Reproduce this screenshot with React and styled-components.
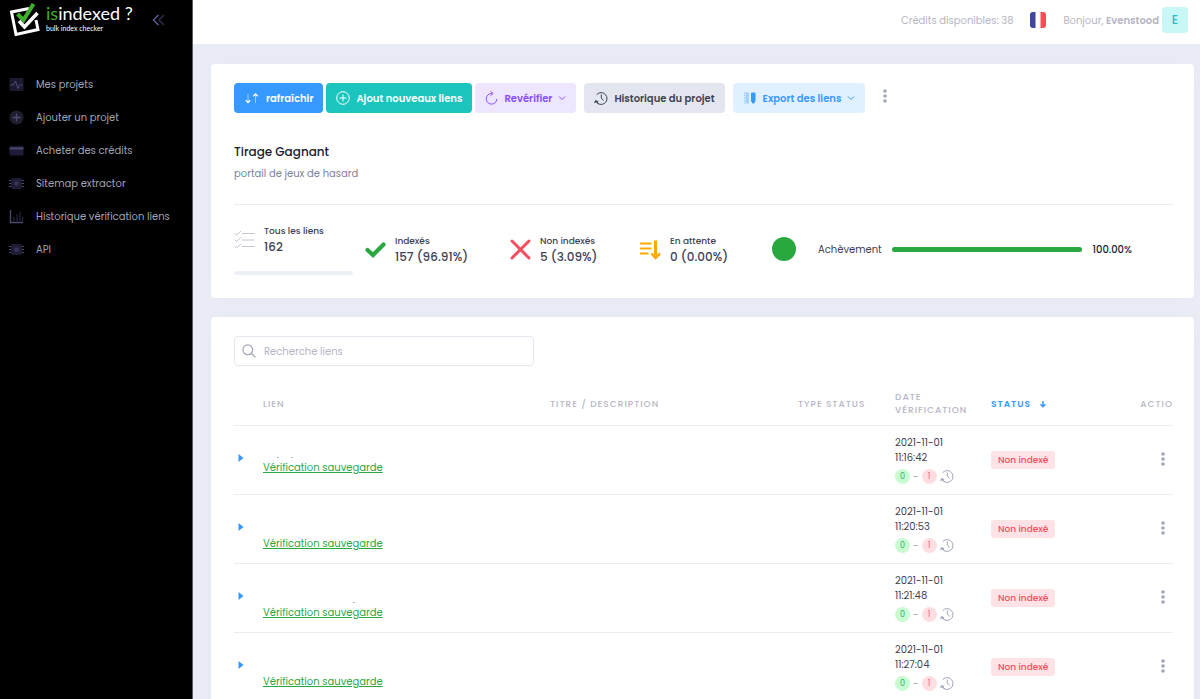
import { useState } from "react";
import styled, { createGlobalStyle } from "styled-components";

const GlobalStyle = createGlobalStyle`
  * {
    box-sizing: border-box;
  }
  body {
    margin: 0;
    font-family: Poppins, Inter, "Liberation Sans", sans-serif;
    font-size: 10px;
    line-height: 15px;
    color: #3f4254;
    background: #eaecf5;
  }
  button, input {
    font: inherit;
  }
`;

const Layout = styled.div`
  display: flex;
  height: 100vh;
  overflow: hidden;
`;

/* sidebar */
const Sidebar = styled.aside`
  flex: 0 0 193px;
  background: #000;
  border-right: 1px solid #5b5c66;
`;
const Brand = styled.div`
  display: flex;
  align-items: flex-start;
  height: 68px;
  padding: 3px 27px 0 9px;
`;
const Logo = styled.a`
  display: flex;
  flex: 1;
  gap: 4px;
  color: #fff;
  text-decoration: none;
  font-family: Lato, "Open Sans", sans-serif;
`;
const LogoText = styled.span`
  display: flex;
  flex-direction: column;
  white-space: nowrap;
`;
const LogoName = styled.span`
  font-size: 18px;
  line-height: 20px;

  em {
    font-style: normal;
    color: #3fae2a;
  }
`;
const LogoTagline = styled.span`
  font-size: 7px;
  line-height: 10px;
`;
const IconButton = styled.button`
  display: inline-flex;
  align-items: center;
  justify-content: center;
  padding: 0;
  border: 0;
  background: none;
  color: ${(props) => props.$color || "#a1a5b7"};
  cursor: pointer;
`;
const CollapseButton = styled(IconButton)`
  margin-top: 11px;
`;
const Nav = styled.nav`
  display: flex;
  flex-direction: column;
`;
const NavItem = styled.a`
  display: flex;
  align-items: center;
  gap: 12px;
  height: 33px;
  padding-left: 9px;
  color: #a2a3b7;
  text-decoration: none;
  white-space: nowrap;
`;

/* page */
const Page = styled.div`
  flex: 1;
  min-width: 0;
  display: flex;
  flex-direction: column;
`;
const Topbar = styled.header`
  display: flex;
  flex-shrink: 0;
  align-items: center;
  justify-content: flex-end;
  padding: 7px 12px 11px;
  background: #fff;
  color: #b5b5c3;
`;
const FlagButton = styled(IconButton)`
  margin: 0 17px;
`;
const UserName = styled.strong`
  font-weight: 600;
`;
const Avatar = styled.span`
  width: 26px;
  margin-left: 3px;
  border-radius: 4px;
  background: #c9f7f5;
  color: #1bc5bd;
  font-size: 12px;
  font-weight: 500;
  line-height: 26px;
  text-align: center;
`;
const Content = styled.main`
  flex: 1;
  display: flex;
  flex-direction: column;
  gap: 19px;
  padding: 20px 6px 20px 18px;
`;
const Card = styled.section`
  padding: 19px 21px 23px 23px;
  border-radius: 4px;
  background: #fff;
  box-shadow: 0 0 20px rgba(76, 87, 125, 0.02);
`;

/* toolbar */
const Toolbar = styled.div`
  display: flex;
  align-items: center;
  gap: 8px;
`;
const ButtonGroup = styled.div`
  display: flex;
  gap: 3px;
`;
const Button = styled.button`
  display: flex;
  align-items: center;
  justify-content: center;
  gap: 6px;
  height: 30px;
  padding: 0 10px;
  border: 0;
  border-radius: 4px;
  background: ${(props) => props.$bg};
  color: ${(props) => props.$color || "#fff"};
  font-weight: 600;
  white-space: nowrap;
  cursor: pointer;
`;
const ToolbarMore = styled(IconButton)`
  align-self: flex-start;
  width: 24px;
  height: 26px;
`;
const Title = styled.h1`
  margin: 29px 0 4px;
  color: #181c32;
  font-size: 12px;
  font-weight: 500;
  line-height: 20px;
`;
const Subtitle = styled.p`
  margin: 0 0 22px;
  color: #7e8299;
  line-height: 16px;
`;

/* stats */
const Stats = styled.div`
  display: grid;
  grid-template-columns: 131fr 145fr 130fr 132fr 401fr;
  align-items: center;
  padding-top: 18px;
  border-top: 1px solid #ebedf3;
`;
const Stat = styled.div`
  display: flex;
  gap: 9px;
  align-items: center;
  white-space: nowrap;
`;
const StatLabel = styled.div`
  font-size: 9px;
  font-weight: 500;
  line-height: 16px;
`;
const StatValue = styled.div`
  font-size: 12px;
  font-weight: 500;
  line-height: 16px;
`;
const TotalBar = styled.div`
  height: 4px;
  margin: 16px 12px 0 0;
  border-radius: 2px;
  background: #ecf0f6;
`;
const Completion = styled.div`
  display: flex;
  align-items: center;
  gap: 10px;
  padding-right: 41px;
`;
const Dot = styled.span`
  width: 24px;
  height: 24px;
  margin-right: 12px;
  border-radius: 50%;
  background: #28a83f;
`;
const Track = styled.div`
  flex: 1;
  height: 5px;
  border-radius: 3px;
  background: #ecf0f6;
`;
const Fill = styled.div`
  height: 100%;
  border-radius: 3px;
  background: #28a83f;
`;
const Percent = styled.span`
  font-weight: 500;
  color: #181c32;
`;

/* search */
const SearchBox = styled.label`
  display: flex;
  align-items: center;
  gap: 8px;
  width: 300px;
  height: 30px;
  padding: 0 7px;
  border: 1px solid #e4e6ef;
  border-radius: 4px;
  color: #a1a5b7;
`;
const SearchInput = styled.input`
  flex: 1;
  min-width: 0;
  padding: 0;
  border: 0;
  outline: 0;
  color: #3f4254;

  &::placeholder {
    color: #b5b5c3;
    opacity: 1;
  }
`;

/* table */
const Table = styled.table`
  width: 100%;
  margin-top: 16px;
  border-collapse: collapse;
  table-layout: fixed;
`;
const Th = styled.th`
  width: ${(props) => props.$width || "auto"};
  height: 43px;
  padding: 9px 0 8px;
  border-bottom: 1px solid #ebedf3;
  color: ${(props) => (props.$active ? "#3699ff" : "#b5b5c3")};
  font-size: 9px;
  font-weight: 500;
  letter-spacing: 1px;
  line-height: 13px;
  text-align: ${(props) => props.$align || "left"};
  text-transform: uppercase;
`;
const SortButton = styled(IconButton)`
  gap: 8px;
  font-weight: 600;
  letter-spacing: inherit;
  text-transform: inherit;
`;
const Td = styled.td`
  padding: 9px 0 10px;
  border-bottom: 1px solid #ebedf3;
  text-align: ${(props) => props.$align || "left"};
`;
const ExpandButton = styled(IconButton)`
  width: 13px;
`;
const UrlLines = styled.div`
  display: flex;
  align-items: flex-end;
  height: ${(props) => props.$lines * 15}px;
`;
const SavedLink = styled.a`
  color: #28a745;
  text-decoration: underline;
`;
const Moment = styled.div`
  width: 60px;
`;
const Counts = styled.div`
  display: flex;
  align-items: flex-start;
  gap: 3px;
  margin-top: 4px;
  color: #a1a5b7;
`;
const Count = styled.span`
  width: 15px;
  border-radius: 50%;
  background: ${(props) => (props.$ok ? "#c9fbd3" : "#ffdde0")};
  color: ${(props) => (props.$ok ? "#35a853" : "#f0647a")};
  font-size: 8px;
  line-height: 15px;
  text-align: center;
`;
const Badge = styled.span`
  display: inline-block;
  padding: 0 7px;
  border-radius: 3px;
  background: #ffe2e5;
  color: #f64e60;
  font-size: 9px;
  font-weight: 500;
  line-height: 18px;
`;
const RowMore = styled(IconButton)`
  width: 20px;
  height: 20px;
`;

function LogoMark() {
  return (
    <svg width="33" height="34" viewBox="0 0 33 34" fill="none" aria-hidden="true">
      <path d="M20 5.500 2.500 9 7 31.500 29 26.500 27 17" stroke="#fff" strokeWidth="3" />
      <path d="m8.500 11 6 6L24.500 1" stroke="#3fae2a" strokeWidth="4" />
      <path d="m10 18 5.500 6L28.500 10" stroke="#fff" strokeWidth="3.500" />
    </svg>
  );
}

function CollapseIcon() {
  return (
    <svg width="13" height="12" viewBox="0 0 13 12" fill="none" strokeWidth="1.500" aria-hidden="true">
      <path d="M6.500 1 1.500 6l5 5" stroke="#5d5c92" />
      <path d="m12 1-5 5 5 5" stroke="#2b2a48" />
    </svg>
  );
}

function NavIcon({ name }) {
  return (
    <svg width="15" height="15" viewBox="0 0 15 15" fill="none" stroke="#4c4b73" aria-hidden="true">
      {name === "pulse" && (
        <>
          <rect x="0.500" y="1" width="14" height="13" rx="1" fill="#1b1a30" stroke="none" />
          <path d="M1.500 8h3l2-4 2.500 7.500L10.500 8h3" />
        </>
      )}
      {name === "plus" && (
        <>
          <circle cx="7.500" cy="7.500" r="7" fill="#1e1e2d" stroke="none" />
          <path d="M7.500 3.500v8M3.500 7.500h8" strokeWidth="1.300" />
        </>
      )}
      {name === "card" && (
        <>
          <rect x="0.500" y="3" width="14" height="9.500" rx="1" fill="#1e1c38" stroke="none" />
          <path d="M.5 5.500h14" stroke="#494870" strokeWidth="2" />
        </>
      )}
      {name === "chip" && (
        <>
          <rect x="2" y="2" width="11" height="11" rx="2" fill="#1e1d33" stroke="none" />
          <path d="M0 4.500h2M0 7.500h2M0 10.500h2M13 4.500h2M13 7.500h2M13 10.500h2" />
          <rect x="5.500" y="5.500" width="4" height="4" fill="#37365a" stroke="none" />
        </>
      )}
      {name === "chart" && (
        <>
          <path d="M1.500 1v12.500H14" strokeWidth="1.300" />
          <path d="M5 12V8M8 12V5M11 12V3M13.500 12V8" stroke="#2d2c4b" />
        </>
      )}
    </svg>
  );
}

function FlagIcon() {
  return (
    <svg width="16" height="16" viewBox="0 0 16 16" aria-hidden="true">
      <path d="M3 0h2.500v16H3a3 3 0 0 1-3-3V3a3 3 0 0 1 3-3Z" fill="#41479b" />
      <path d="M10.500 0H13a3 3 0 0 1 3 3v10a3 3 0 0 1-3 3h-2.500Z" fill="#ff4b55" />
    </svg>
  );
}

function SortIcon() {
  return (
    <svg width="16" height="14" viewBox="0 0 16 14" fill="none" stroke="currentColor" aria-hidden="true">
      <path d="M4 3v8.500M11.500 3v9" opacity=".5" />
      <path d="M1.800 9.300 4 11.500l2.200-2.200M9.300 5.200 11.500 3l2.200 2.200" strokeWidth="1.300" />
    </svg>
  );
}

function PlusCircleIcon() {
  return (
    <svg width="14" height="14" viewBox="0 0 14 14" fill="none" stroke="currentColor" aria-hidden="true">
      <circle cx="7" cy="7" r="6.300" />
      <path d="M7 3.500v7M3.500 7h7" />
    </svg>
  );
}

function ReloadIcon() {
  return (
    <svg width="13" height="14" viewBox="0 0 13 14" fill="none" stroke="currentColor" aria-hidden="true">
      <path d="M7.500 2.500H6.500A5.300 5.300 0 1 0 11.800 8" />
      <path d="M5.500.3 8 2.500 5.500 4.700" />
    </svg>
  );
}

function ChevronIcon() {
  return (
    <svg width="8" height="8" viewBox="0 0 8 8" fill="none" stroke="currentColor" aria-hidden="true">
      <path d="m1 2.500 3 3 3-3" />
    </svg>
  );
}

function HistoryIcon() {
  return (
    <svg width="14" height="14" viewBox="0 0 14 14" fill="none" stroke="currentColor" aria-hidden="true">
      <path d="M2.600 3.700A5.900 5.900 0 1 1 2 10.500q1 1.500 2.600 2.300" />
      <path d="M.6 12 1.800 9.800l2.300 1" strokeWidth="1.300" />
      <path d="M7.300 3.500V7l2.200 2.500" />
    </svg>
  );
}

function ExportIcon() {
  return (
    <svg width="14" height="12" viewBox="0 0 14 12" fill="currentColor" aria-hidden="true">
      <path d="M1 .5h5v11H1v-1h2v-1H1v-1.500h2v-1H1V5.500h2v-1H1V3h2V2H1Z" opacity=".35" />
      <path d="M8 1.500q0-1 1-1h2.500q1 0 1 1V9l-1.500 2.500H9.500L8 9Z" />
    </svg>
  );
}

function DotsIcon() {
  return (
    <svg width="4" height="14" viewBox="0 0 4 14" fill="currentColor" aria-hidden="true">
      <circle cx="2" cy="2" r="1.800" />
      <circle cx="2" cy="7" r="1.800" />
      <circle cx="2" cy="12" r="1.800" />
    </svg>
  );
}

function StatIcon({ name }) {
  return (
    <svg width="21" height="21" viewBox="0 0 21 21" fill="none" aria-hidden="true">
      {name === "list" && (
        <path
          d="m.5 4 2 2L7 2M.5 10.500l2 2L7 8.500M.5 17l2 2L7 15M8 4.500h12.500M8 11h12.500M8 17.500h12.500"
          stroke="#c3c5d0"
        />
      )}
      {name === "check" && (
        <path d="m2.500 11 5.500 5L18.500 5.500" stroke="#28a83f" strokeWidth="4.200" strokeLinecap="round" />
      )}
      {name === "cross" && (
        <path d="m2 2 17 17M19 2 2 19" stroke="#f64e60" strokeWidth="3" strokeLinecap="round" />
      )}
      {name === "pending" && (
        <>
          <path d="M0 4.500h11.500M0 9.500h11.500M0 14.500h8.500" stroke="#ffa800" strokeWidth="2" />
          <path d="M15.500 1.500v15" stroke="#ffa800" strokeWidth="3" />
          <path d="M11.500 14.500 15.500 19l4.500-4.500" stroke="#ffa800" strokeWidth="2.500" />
        </>
      )}
    </svg>
  );
}

function SearchIcon() {
  return (
    <svg width="14" height="14" viewBox="0 0 14 14" fill="none" stroke="currentColor" strokeWidth="1.200" aria-hidden="true">
      <circle cx="5.800" cy="5.800" r="4.900" />
      <path d="m9.300 9.300 4.200 4" />
    </svg>
  );
}

function ArrowDownIcon() {
  return (
    <svg width="8" height="8" viewBox="0 0 8 8" fill="none" stroke="currentColor" strokeWidth="1.500" aria-hidden="true">
      <path d="M4 1v6M1.500 4.200 4 6.700l2.500-2.500" />
    </svg>
  );
}

function CaretIcon() {
  return (
    <svg width="6" height="10" viewBox="0 0 6 10" fill="#3699ff" aria-hidden="true">
      <path d="M.5 1v8L5.500 5Z" />
    </svg>
  );
}

/* leftovers of the hidden urls */
function UrlMarks({ marks }) {
  return (
    <svg width="120" height="6" viewBox="0 0 120 6" fill="#9698a5" aria-hidden="true">
      {marks.map((x) => (
        <rect key={x} x={x} y="3" width="1.500" height="1" />
      ))}
    </svg>
  );
}

const menu = [
  { icon: "pulse", label: "Mes projets" },
  { icon: "plus", label: "Ajouter un projet" },
  { icon: "card", label: "Acheter des crédits" },
  { icon: "chip", label: "Sitemap extractor" },
  { icon: "chart", label: "Historique vérification liens" },
  { icon: "chip", label: "API" },
];

const stats = [
  { icon: "check", label: "Indexés", value: "157 (96.91%)" },
  { icon: "cross", label: "Non indexés", value: "5 (3.09%)" },
  { icon: "pending", label: "En attente", value: "0 (0.00%)" },
];

const links = [
  { id: 1, date: "2021-11-01", time: "11:16:42", lines: 1, marks: [14, 28] },
  { id: 2, date: "2021-11-01", time: "11:20:53", lines: 2, marks: [] },
  { id: 3, date: "2021-11-01", time: "11:21:48", lines: 2, marks: [90] },
  { id: 4, date: "2021-11-01", time: "11:27:04", lines: 2, marks: [] },
];

function LinkRow({ link }) {
  return (
    <tr>
      <Td>
        <ExpandButton aria-label="Détails">
          <CaretIcon />
        </ExpandButton>
      </Td>
      <Td>
        <UrlLines $lines={link.lines}>
          <UrlMarks marks={link.marks} />
        </UrlLines>
        <SavedLink href="#">Vérification sauvegarde</SavedLink>
      </Td>
      <Td />
      <Td />
      <Td>
        <Moment>
          {link.date} {link.time}
        </Moment>
        <Counts>
          <Count $ok>0</Count>-<Count>1</Count>
          <HistoryIcon />
        </Counts>
      </Td>
      <Td>
        <Badge>Non indexé</Badge>
      </Td>
      <Td $align="right">
        <RowMore aria-label="Actions">
          <DotsIcon />
        </RowMore>
      </Td>
    </tr>
  );
}

export default function App() {
  const [search, setSearch] = useState("");
  const completion = 100;

  return (
    <>
      <GlobalStyle />
      <Layout>
        <Sidebar>
          <Brand>
            <Logo href="#">
              <LogoMark />
              <LogoText>
                <LogoName>
                  <em>is</em>indexed ?
                </LogoName>
                <LogoTagline>bulk index checker</LogoTagline>
              </LogoText>
            </Logo>
            <CollapseButton aria-label="Réduire le menu">
              <CollapseIcon />
            </CollapseButton>
          </Brand>
          <Nav>
            {menu.map((item) => (
              <NavItem key={item.label} href="#">
                <NavIcon name={item.icon} />
                {item.label}
              </NavItem>
            ))}
          </Nav>
        </Sidebar>

        <Page>
          <Topbar>
            <span>Crédits disponibles: 38</span>
            <FlagButton aria-label="Langue">
              <FlagIcon />
            </FlagButton>
            <span>
              Bonjour, <UserName>Evenstood</UserName>
            </span>
            <Avatar>E</Avatar>
          </Topbar>

          <Content>
            <Card>
              <Toolbar>
                <ButtonGroup>
                  <Button $bg="#3699ff">
                    <SortIcon />
                    rafraîchir
                  </Button>
                  <Button $bg="#1bc5bd">
                    <PlusCircleIcon />
                    Ajout nouveaux liens
                  </Button>
                  <Button $bg="#eee5ff" $color="#8950fc">
                    <ReloadIcon />
                    Revérifier
                    <ChevronIcon />
                  </Button>
                </ButtonGroup>
                <Button $bg="#e4e6ef" $color="#3f4254">
                  <HistoryIcon />
                  Historique du projet
                </Button>
                <Button $bg="#e1f0ff" $color="#3699ff">
                  <ExportIcon />
                  Export des liens
                  <ChevronIcon />
                </Button>
                <ToolbarMore aria-label="Plus">
                  <DotsIcon />
                </ToolbarMore>
              </Toolbar>

              <Title>Tirage Gagnant</Title>
              <Subtitle>portail de jeux de hasard</Subtitle>

              <Stats>
                <div>
                  <Stat>
                    <StatIcon name="list" />
                    <div>
                      <StatLabel>Tous les liens</StatLabel>
                      <StatValue>162</StatValue>
                    </div>
                  </Stat>
                  <TotalBar />
                </div>
                {stats.map((stat) => (
                  <Stat key={stat.label}>
                    <StatIcon name={stat.icon} />
                    <div>
                      <StatLabel>{stat.label}</StatLabel>
                      <StatValue>{stat.value}</StatValue>
                    </div>
                  </Stat>
                ))}
                <Completion>
                  <Dot />
                  <span>Achèvement</span>
                  <Track>
                    <Fill style={{ width: `${completion}%` }} />
                  </Track>
                  <Percent>{completion.toFixed(2)}%</Percent>
                </Completion>
              </Stats>
            </Card>

            <Card>
              <SearchBox>
                <SearchIcon />
                <SearchInput
                  aria-label="Recherche liens"
                  placeholder="Recherche liens"
                  value={search}
                  onChange={(e) => setSearch(e.target.value)}
                />
              </SearchBox>

              <Table>
                <thead>
                  <tr>
                    <Th $width="29px" />
                    <Th>Lien</Th>
                    <Th $width="248px">Titre / Description</Th>
                    <Th $width="97px">Type status</Th>
                    <Th $width="96px">Date vérification</Th>
                    <Th $width="145px" $active>
                      <SortButton $color="#3699ff">
                        Status
                        <ArrowDownIcon />
                      </SortButton>
                    </Th>
                    <Th $width="37px" $align="right">
                      Actio
                    </Th>
                  </tr>
                </thead>
                <tbody>
                  {links.map((link) => (
                    <LinkRow key={link.id} link={link} />
                  ))}
                </tbody>
              </Table>
            </Card>
          </Content>
        </Page>
      </Layout>
    </>
  );
}
